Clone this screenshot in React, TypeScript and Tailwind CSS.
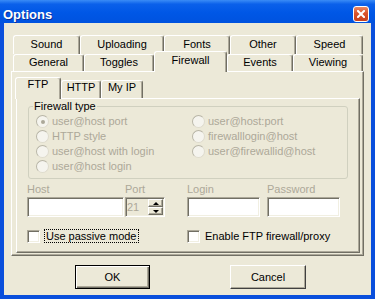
import React from "react";

type TabDef = { label: string; w: string; selected?: boolean };

const topRow: TabDef[] = [
	{ label: "Sound", w: "w-[67px]" },
	{ label: "Uploading", w: "w-[84px]" },
	{ label: "Fonts", w: "w-[66px]" },
	{ label: "Other", w: "w-[66px]" },
	{ label: "Speed", w: "w-[67px]" },
];

const bottomRow: TabDef[] = [
	{ label: "General", w: "w-[71px]" },
	{ label: "Toggles", w: "w-[70px]" },
	{ label: "Firewall", w: "w-[73px]", selected: true },
	{ label: "Events", w: "w-[66px]" },
	{ label: "Viewing", w: "w-[70px]" },
];

const innerTabs: TabDef[] = [
	{ label: "FTP", w: "w-[46px]", selected: true },
	{ label: "HTTP", w: "w-[40px]" },
	{ label: "My IP", w: "w-[42px]" },
];

const radiosLeft = ["user@host port", "HTTP style", "user@host with login", "user@host login"];
const radiosRight = ["user@host:port", "firewalllogin@host", "user@firewallid@host", ""];

const tabBase =
	"flex shrink-0 justify-center rounded-t-[3px] border-t border-l border-r border-t-white border-l-white border-r-[#716f64] bg-[#ece9d8] shadow-[inset_-1px_0_0_#aca899]";

const raised =
	"border-t border-l border-r border-b border-t-white border-l-white border-r-[#716f64] border-b-[#716f64] shadow-[inset_-1px_-1px_0_#aca899]";

const sunken =
	"border border-t-[#aca899] border-l-[#aca899] border-r-white border-b-white shadow-[inset_1px_1px_0_#716f64,inset_-1px_-1px_0_#f1efe2]";

function Radio({ label, checked }: { label: string; checked?: boolean }) {
	return (
		<div className="flex h-[15px] items-center gap-[3px]">
			<div className="flex h-[13px] w-[13px] items-center justify-center rounded-full border border-t-[#b8b5a6] border-l-[#b8b5a6] border-r-[#dedbcd] border-b-[#dedbcd] bg-[#f5f4ee]">
				{checked && <div className="h-[4px] w-[4px] rounded-full bg-[#aca899]" />}
			</div>
			<span className="text-[#aca899]">{label}</span>
		</div>
	);
}

function Field({ label, w, ml, children }: { label: string; w: string; ml: string; children?: React.ReactNode }) {
	return (
		<div className={`flex flex-col ${w} ${ml}`}>
			<span className="mb-[1px] h-[13px] text-[#aca899]">{label}</span>
			{children ?? <div className={`h-[20px] bg-white ${sunken}`} />}
		</div>
	);
}

function Checkbox() {
	return <div className={`h-[13px] w-[13px] shrink-0 bg-white ${sunken}`} />;
}

export default function App() {
	return (
		<div className="h-[299px] w-[375px] overflow-hidden bg-[#0a4fdc] font-['Liberation_Sans',Arial,sans-serif] text-[11px] leading-[13px] text-black select-none">
			{/* title bar */}
			<div className="flex h-[23px] justify-between bg-[linear-gradient(to_bottom,#3a8cf6_0%,#0b60ea_18%,#0057e6_55%,#0052df_100%)]">
				<span className="pl-[3px] pt-[7px] text-[13px] leading-[16px] font-bold text-white [text-shadow:1px_1px_0_#0c2f99]">
					Options
				</span>
				<div className="mr-[6px] mt-[6px] flex h-[16px] w-[16px] items-center justify-center rounded-[3px] border border-white bg-[linear-gradient(to_bottom,#ec8a64,#d9532c_45%,#c8401d)]">
					<svg width="8" height="8" viewBox="0 0 8 8">
						<path d="M1 1L7 7M7 1L1 7" stroke="white" strokeWidth="2" strokeLinecap="square" />
					</svg>
				</div>
			</div>

			{/* body */}
			<div className="mx-[4px] h-[272px] bg-[#ece9d8] pl-[7px] pt-[12px]">
				<div className="ml-[2px] flex h-[19px]">
					{topRow.map((t) => (
						<div key={t.label} className={`${tabBase} ${t.w} h-[19px] pt-[2px]`}>
							{t.label}
						</div>
					))}
				</div>
				<div className="ml-[2px] flex h-[17px] items-end">
					{bottomRow.map((t) => (
						<div
							key={t.label}
							className={
								t.selected
									? `${tabBase} ${t.w} relative z-10 -mb-[1px] h-[21px] pt-[2px]`
									: `${tabBase} ${t.w} h-[17px] pt-[1px]`
							}
						>
							{t.label}
						</div>
					))}
				</div>

				{/* outer panel */}
				<div className={`h-[185px] w-[353px] bg-[#ece9d8] ${raised}`}>
					<div className="ml-[3px] mt-[8px] flex h-[18px] items-end">
						{innerTabs.map((t) => (
							<div
								key={t.label}
								className={
									t.selected
										? `${tabBase} ${t.w} relative z-10 -mb-[1px] h-[22px]`
										: `${tabBase} ${t.w} h-[18px]`
								}
							>
								{t.label}
							</div>
						))}
					</div>

					{/* inner panel */}
					<div className={`ml-[4px] flex h-[155px] w-[344px] flex-col ${raised}`}>
						<fieldset className="ml-[11px] mt-[1px] h-[79px] w-[320px] rounded-[3px] border border-[#d0d0bf]">
							<legend className="ml-[4px] px-[1px] leading-[13px]">Firewall type</legend>
							<div className="mt-[1px] grid grid-cols-[156px_1fr] pl-[7px]">
								{radiosLeft.map((l, i) => (
									<React.Fragment key={l}>
										<Radio label={l} checked={i === 0} />
										{radiosRight[i] ? <Radio label={radiosRight[i]} /> : <div />}
									</React.Fragment>
								))}
							</div>
						</fieldset>

						<div className="ml-[10px] mt-[4px] flex">
							<Field label="Host" w="w-[97px]" ml="ml-0" />
							<Field label="Port" w="w-[40px]" ml="ml-[1px]">
								<div className={`flex h-[20px] bg-[#ece9d8] ${sunken}`}>
									<span className="flex-1 pl-[1px] pt-[3px] text-[#aca899]">21</span>
									<div className="my-[1px] mr-[1px] flex w-[15px] flex-col">
										<div className={`flex h-[9px] items-center justify-center bg-[#ece9d8] ${raised}`}>
											<div className="h-0 w-0 border-x-[3px] border-b-[3px] border-x-transparent border-b-black" />
										</div>
										<div className={`flex h-[9px] items-center justify-center bg-[#ece9d8] ${raised}`}>
											<div className="h-0 w-0 border-x-[3px] border-t-[3px] border-x-transparent border-t-black" />
										</div>
									</div>
								</div>
							</Field>
							<Field label="Login" w="w-[73px]" ml="ml-[22px]" />
							<Field label="Password" w="w-[73px]" ml="ml-[7px]" />
						</div>

						<div className="ml-[10px] mt-[12px] flex h-[14px] items-center">
							<div className="flex w-[160px] items-center gap-[4px]">
								<Checkbox />
								<span className="h-[14px] border border-dotted border-black px-[1px] leading-[12px]">
									Use passive mode
								</span>
							</div>
							<div className="flex items-center gap-[5px]">
								<Checkbox />
								<span>Enable FTP firewall/proxy</span>
							</div>
						</div>
					</div>
				</div>

				{/* buttons */}
				<div className="mt-[9px] flex">
					<div className="ml-[64px] flex h-[24px] w-[75px] items-center justify-center border border-black bg-[#ece9d8] shadow-[inset_1px_1px_0_#fff,inset_-1px_-1px_0_#716f64,inset_-2px_-2px_0_#aca899]">
						OK
					</div>
					<div className="ml-[80px] flex h-[24px] w-[76px] items-center justify-center border border-t-white border-l-white border-r-[#404040] border-b-[#404040] bg-[#ece9d8] shadow-[inset_-1px_-1px_0_#aca899]">
						Cancel
					</div>
				</div>
			</div>
		</div>
	);
}
